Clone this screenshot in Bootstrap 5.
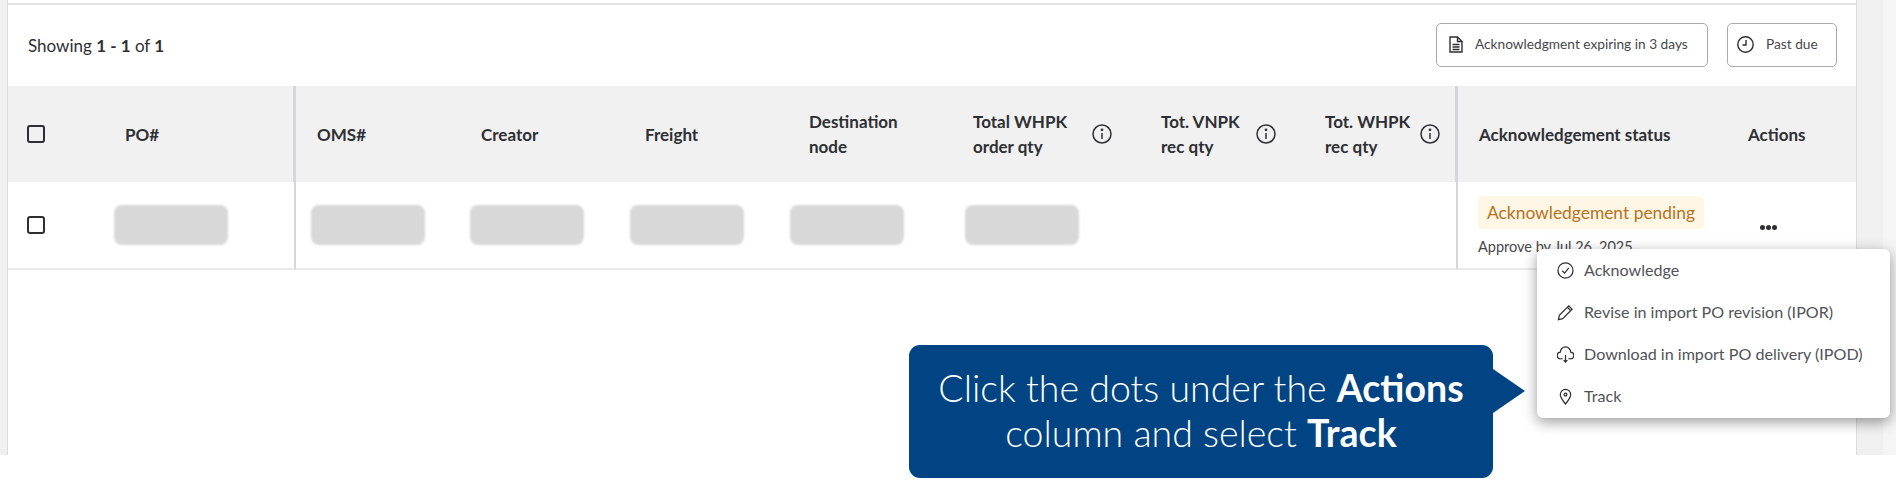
<!DOCTYPE html>
<html lang="en">
<head>
  <meta charset="UTF-8" />
  <title>Purchase orders</title>
  <link href="https://cdn.jsdelivr.net/npm/bootstrap@5.3.0/dist/css/bootstrap.min.css" rel="stylesheet" />
  <style>
    body {
      font-family: Lato, "Noto Sans", sans-serif;
      color: #2e2f32;
      background: #fff;
      height: 480px;
      overflow: hidden;
    }

    .page-frame {
      height: 455px;
      padding: 0 40px 0 8px;
      overflow: hidden;
      background: linear-gradient(to right, #f0f0f0 1883px, #f5f5f5 1883px);
    }

    .po-panel {
      height: 455px;
      padding-top: 3px;
      background: #fff;
      box-shadow: 0 0 0 1px #dcdcdc;
    }

    .po-panel-inner {
      height: 100%;
      border-top: 2px solid #e3e4e5;
    }

    .po-toolbar {
      height: 81px;
      padding: 0 19px 0 20px;
    }

    .showing-text {
      font-size: 17px;
      margin-right: auto;
    }

    .showing-text b {
      font-weight: 700;
    }

    .filter-chip {
      display: flex;
      align-items: center;
      height: 44px;
      margin-top: -2px;
      font-size: 13.7px;
      color: #46474a;
      background: #fff;
      border: 1px solid #a9aaad;
      border-radius: 5px;
    }

    .chip-expiring {
      width: 272px;
      padding-left: 12px;
      gap: 12px;
      margin-right: 19px;
    }

    .chip-late {
      width: 110px;
      padding-left: 9px;
      gap: 12px;
    }

    .po-table {
      table-layout: fixed;
      width: 1848px;
      margin: 0;
      font-size: 17px;
      border-collapse: separate;
      border-spacing: 0;
    }

    .po-table th {
      height: 96px;
      padding: 0;
      background: #f1f1f2;
      font-weight: 700;
      line-height: 25px;
      vertical-align: middle;
      border: 0;
      color: #2e2f32;
    }

    .po-table td {
      height: 88px;
      padding: 0;
      vertical-align: middle;
      border: 0;
      border-bottom: 2px solid #e9e9ea;
    }

    .w-c1 { width: 106px; }
    .w-c2 { width: 182px; }
    .w-c3 { width: 174px; }
    .w-c4 { width: 160px; }
    .w-c5 { width: 160px; }
    .w-c6 { width: 175px; }
    .w-c7 { width: 188px; }
    .w-c8 { width: 164px; }
    .w-c9 { width: 141px; }
    .w-c10 { width: 282px; }
    .w-c11 { width: 116px; }

    .po-table .in-8 { padding-left: 8px; }
    .po-table .in-11 { padding-left: 11px; }
    .po-table .in-15 { padding-left: 15px; }
    .po-table .in-19 { padding-left: 19px; }
    .po-table .in-20 { padding-left: 20px; }
    .po-table .in-21 { padding-left: 21px; }

    .po-table th.pin-right {
      border-right: 3px solid #d5d6d9;
    }

    .po-table td.pin-right {
      border-right: 2px solid #d5d6d9;
    }

    .po-table td.status-cell {
      vertical-align: top;
      padding-top: 14px;
    }

    .head-wrap {
      display: flex;
      align-items: center;
      justify-content: space-between;
      padding-right: 41px;
    }

    .head-wrap.end-col {
      padding-right: 15px;
    }

    .fake-check {
      display: block;
      width: 18px;
      height: 18px;
      margin-left: 19px;
      border: 2px solid #2e2f32;
      border-radius: 3px;
    }

    .blur-box {
      width: 114px;
      height: 40px;
      background: #d8d8d8;
      border-radius: 8px;
      filter: blur(1px);
    }

    .status-pill {
      display: inline-block;
      width: 226px;
      padding-left: 9px;
      font-size: 17.4px;
      line-height: 33px;
      color: #b8711a;
      background: #fff7e6;
      border-radius: 4px;
      white-space: nowrap;
    }

    .status-sub {
      margin-top: 8px;
      font-size: 14.500px;
      line-height: 20px;
      color: #46474a;
      white-space: nowrap;
    }

    .action-dots {
      display: flex;
      gap: 1px;
      margin-top: 4px;
    }

    .action-dots i {
      width: 5px;
      height: 5px;
      background: #2e2f32;
      border-radius: 50%;
    }

    .action-menu {
      position: absolute;
      top: 249px;
      left: 1537px;
      width: 353px;
      height: 169px;
      background: #fff;
      border-radius: 6px;
      box-shadow: 0 4px 14px rgba(0, 0, 0, .4);
    }

    .action-menu .menu-row {
      display: flex;
      align-items: center;
      gap: 10px;
      height: 42px;
      padding-left: 20px;
      font-size: 16.100px;
      color: #515357;
      white-space: nowrap;
    }

    .callout {
      position: absolute;
      top: 345px;
      left: 909px;
      width: 584px;
      height: 133px;
      padding-bottom: 4px;
      display: flex;
      align-items: center;
      justify-content: center;
      text-align: center;
      font-size: 37.5px;
      font-weight: 300;
      line-height: 45px;
      color: #fff;
      background: #004483;
      border-radius: 11px;
    }

    .callout b {
      font-weight: 700;
    }

    .callout::after {
      content: "";
      position: absolute;
      top: 24px;
      left: 100%;
      border-style: solid;
      border-width: 22px 0 22px 32px;
      border-color: transparent transparent transparent #004483;
    }
  </style>
</head>
<body>
  <div class="page-frame">
    <div class="po-panel">
      <div class="po-panel-inner">
        <div class="po-toolbar d-flex align-items-center">
          <div class="showing-text">Showing <b>1 - 1</b> of <b>1</b></div>
          <div class="filter-chip chip-expiring">
            <svg width="14" height="17" viewBox="0 0 14 17" fill="none" stroke="#2e2f32" stroke-width="1.4"><path d="M1 1h7.500L13 5.500V16H1z"/><path d="M8.500 1v4.500H13M3.500 8.500h7M3.500 11h7M3.500 13.500h7"/></svg>
            <span>Acknowledgment expiring in 3 days</span>
          </div>
          <div class="filter-chip chip-late">
            <svg width="17" height="17" viewBox="0 0 17 17" fill="none" stroke="#2e2f32" stroke-width="1.400"><circle cx="8.500" cy="8.500" r="7.700"/><path d="M9 4v5H5.500"/></svg>
            <span>Past due</span>
          </div>
        </div>
        <table class="table po-table">
          <colgroup>
            <col class="w-c1" /><col class="w-c2" /><col class="w-c3" /><col class="w-c4" /><col class="w-c5" /><col class="w-c6" /><col class="w-c7" /><col class="w-c8" /><col class="w-c9" /><col class="w-c10" /><col class="w-c11" />
          </colgroup>
          <thead>
            <tr>
              <th><span class="fake-check"></span></th>
              <th class="pin-right in-11">PO#</th>
              <th class="in-21">OMS#</th>
              <th class="in-11">Creator</th>
              <th class="in-15">Freight</th>
              <th class="in-19">Destination<br />node</th>
              <th class="in-8"><div class="head-wrap"><span>Total WHPK<br />order qty</span><svg width="20" height="20" viewBox="0 0 20 20" fill="none" stroke="#2e2f32" stroke-width="1.500"><circle cx="10" cy="10" r="9"/><path d="M10 9v6"/><circle cx="10" cy="5.800" r=".6"/></svg></div></th>
              <th class="in-8"><div class="head-wrap"><span>Tot. VNPK<br />rec qty</span><svg width="20" height="20" viewBox="0 0 20 20" fill="none" stroke="#2e2f32" stroke-width="1.500"><circle cx="10" cy="10" r="9"/><path d="M10 9v6"/><circle cx="10" cy="5.800" r=".6"/></svg></div></th>
              <th class="pin-right in-8"><div class="head-wrap end-col"><span>Tot. WHPK<br />rec qty</span><svg width="20" height="20" viewBox="0 0 20 20" fill="none" stroke="#2e2f32" stroke-width="1.500"><circle cx="10" cy="10" r="9"/><path d="M10 9v6"/><circle cx="10" cy="5.800" r=".6"/></svg></div></th>
              <th class="in-21">Acknowledgement status</th>
              <th class="in-8">Actions</th>
            </tr>
          </thead>
          <tbody>
            <tr>
              <td><span class="fake-check"></span></td>
              <td class="pin-right"><div class="blur-box"></div></td>
              <td class="in-15"><div class="blur-box"></div></td>
              <td><div class="blur-box"></div></td>
              <td><div class="blur-box"></div></td>
              <td><div class="blur-box"></div></td>
              <td><div class="blur-box"></div></td>
              <td></td>
              <td class="pin-right"></td>
              <td class="status-cell in-20">
                <span class="status-pill">Acknowledgement pending</span>
                <div class="status-sub">Approve by Jul 26, 2025</div>
              </td>
              <td class="in-20"><div class="action-dots"><i></i><i></i><i></i></div></td>
            </tr>
          </tbody>
        </table>
      </div>
    </div>
  </div>

  <div class="action-menu">
    <div class="menu-row">
      <svg width="17" height="17" viewBox="0 0 18 18" fill="none" stroke="#2e2f32" stroke-width="1.300"><circle cx="9" cy="9" r="8"/><path d="M5.500 9.300 8 11.800l4.500-5.500"/></svg>
      Acknowledge
    </div>
    <div class="menu-row">
      <svg width="17" height="17" viewBox="0 0 18 18" fill="none" stroke="#2e2f32" stroke-width="1.300"><path d="M1.500 16.500l1-4.500L12.500 2l3.500 3.500L6 15.500z"/><path d="M11 3.500 14.500 7"/></svg>
      Revise in import PO revision (IPOR)
    </div>
    <div class="menu-row">
      <svg width="17" height="17" viewBox="0 0 18 18" fill="none" stroke="#2e2f32" stroke-width="1.300"><path d="M6 13.500H4a3.500 3.500 0 0 1-.5-7 5.500 5.500 0 0 1 11 0 3.500 3.500 0 0 1-.5 7h-2"/><path d="M9 9.500v7.500M7 15l2 2 2-2"/></svg>
      Download in import PO delivery (IPOD)
    </div>
    <div class="menu-row">
      <svg width="17" height="17" viewBox="0 0 18 18" fill="none" stroke="#2e2f32" stroke-width="1.300"><path d="M9 17c-3-4-5.500-6.500-5.500-10a5.500 5.500 0 0 1 11 0c0 3.500-2.500 6-5.500 10z"/><circle cx="9" cy="7" r="1.500"/></svg>
      Track
    </div>
  </div>

  <div class="callout">
    <div>Click the dots under the <b>Actions</b><br />column and select <b>Track</b></div>
  </div>

  <script src="https://cdn.jsdelivr.net/npm/bootstrap@5.3.0/dist/js/bootstrap.bundle.min.js"></script>
</body>
</html>
